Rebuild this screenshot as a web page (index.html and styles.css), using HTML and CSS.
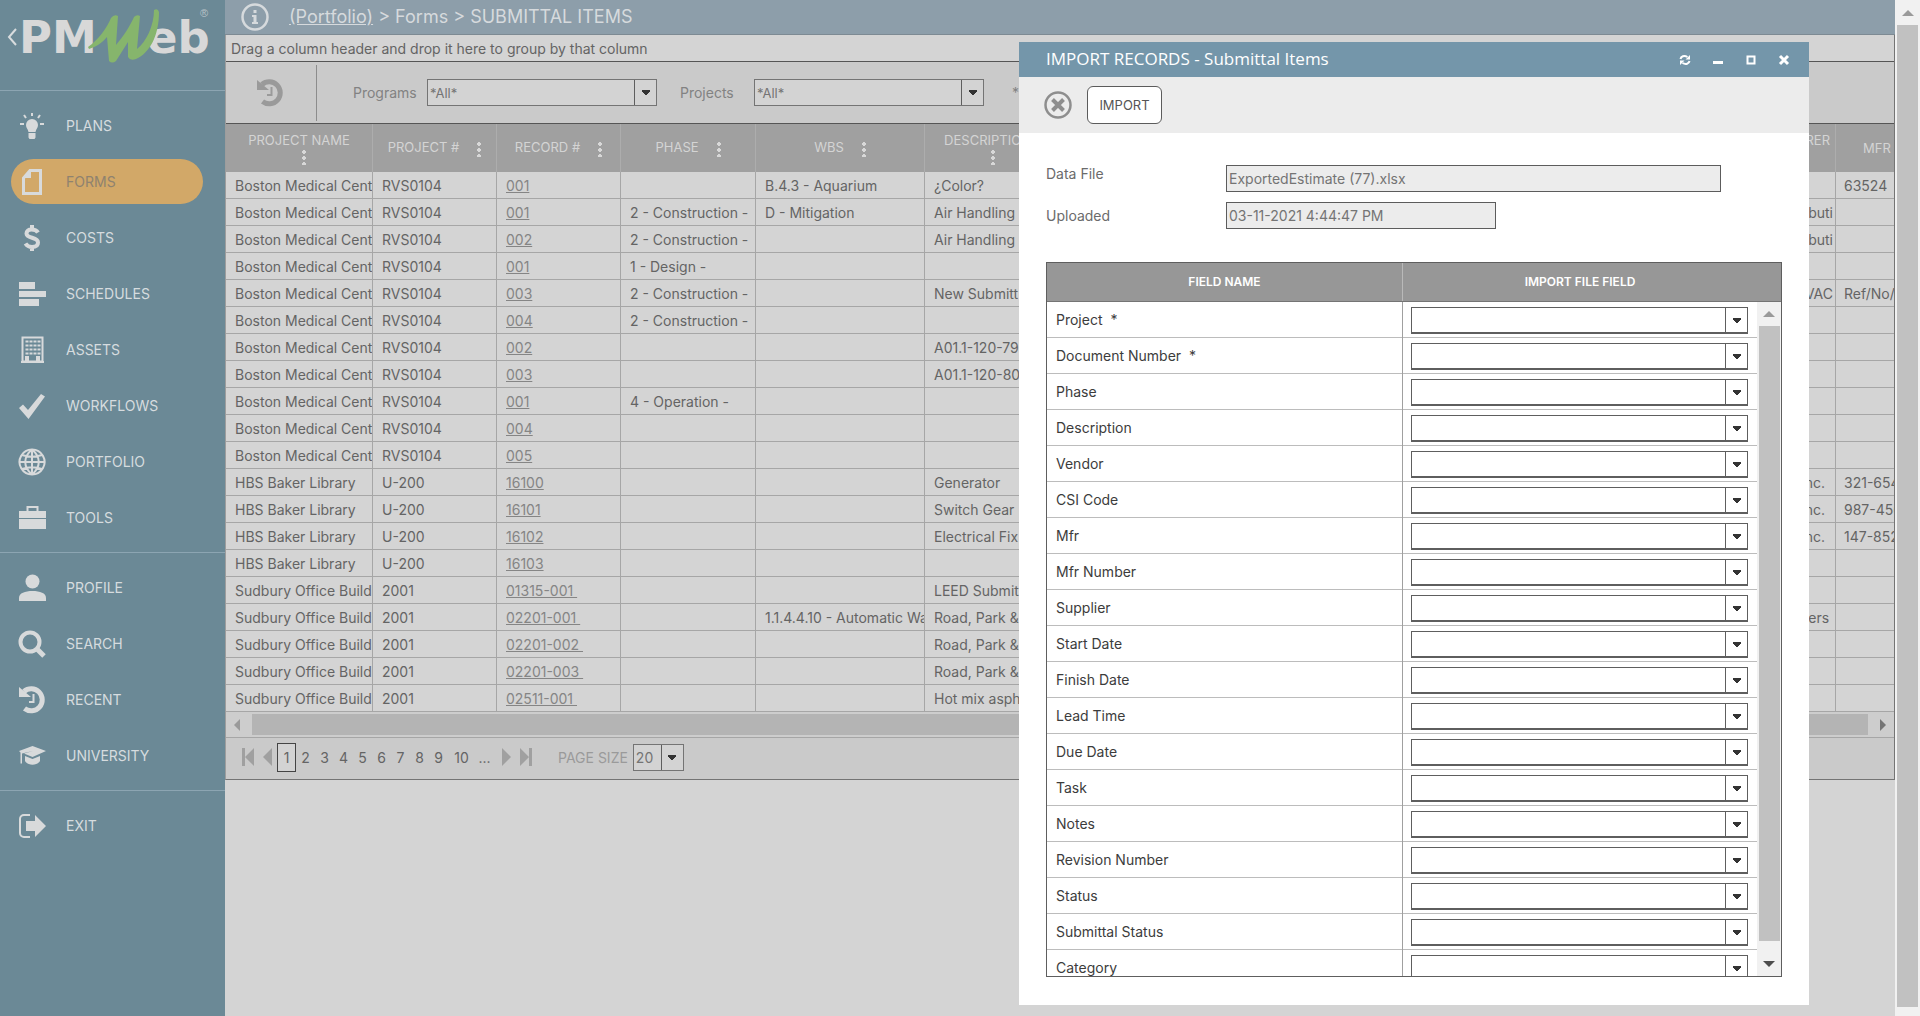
FILE: index.html
```html
<!DOCTYPE html>
<html lang="en">
<head>
<meta charset="utf-8">
<title>PMWeb - Submittal Items</title>
<link rel="stylesheet" href="styles.css">
</head>
<body>
<div class="app">
  <nav class="sidebar">
    <div class="brand">
      <svg class="logo" viewBox="0 0 225 90" role="img" aria-label="PMWeb">
        <path d="M16 29 L9 37 L16 45" fill="none" stroke="#d8dcde" stroke-width="2"/>
        <text class="logo-word" x="19" y="53">PM</text>
        <text class="logo-word" x="147" y="53">eb</text>
        <path d="M88 47C98 40 107 28 111 18Q114 14 118 16L116 45C123 37 130 26 134 17Q137 14 140 16L137 49C146 42 154 26 154 10Q158 8 159 12C159 35 150 53 136 59Q130 61 128 57L128 42L116 61Q112 64 109 61L107 37C103 42 96 47 89 49Z" fill="#86b56c"/>
        <text class="logo-mark" x="200" y="17">®</text>
      </svg>
    </div>
    <ul class="menu">
      <li><a href="#"><svg viewBox="0 0 28 28"><path d="M14 7a6 6 0 0 1 6 6c0 3-2 4-2.500 7h-7C10 17 8 16 8 13a6 6 0 0 1 6-6zM10.500 21h7v4.500l-1 1.500h-5l-1-1.500z"/><path class="line thin" d="M14 1v3M6 3l2 3M22 3l-2 3M2 12h4M22 12h4"/></svg>PLANS</a></li>
      <li><a href="#" class="active"><svg viewBox="0 0 28 28"><path class="line" d="M12 2.500h10.500v23h-17V10z"/><path d="M5 10h8V2z"/></svg>FORMS</a></li>
      <li><a href="#"><svg viewBox="0 0 28 28"><path class="line bold" d="M20 8.500C18.500 6 16 5.500 13.500 5.500c-3 0-5 1.500-5 4 0 5.500 11.500 3 11.500 9 0 3-2.500 4.500-6 4.500-3 0-5-1-6.500-3.500M14 1v5M14 22v5"/></svg>COSTS</a></li>
      <li><a href="#"><svg viewBox="0 0 28 28"><path d="M1 2h16v7H1zM1 11h27v6H1zM1 19h20v7H1z"/></svg>SCHEDULES</a></li>
      <li><a href="#"><svg viewBox="0 0 28 28"><path class="line thin" d="M4.500 1.500h20v24h-20z"/><path class="line thin dashed" d="M7.500 5.500h15M7.500 9.500h15M7.500 13.500h15M7.500 17.500h15"/><path d="M7 20h4v5H7zM18 20h4v5h-4zM3 25h23v2H3z"/></svg>ASSETS</a></li>
      <li><a href="#"><svg viewBox="0 0 28 28"><path d="M1 16l4-3.500 5 5.500L23 2l4 2.500L10.500 27z"/></svg>WORKFLOWS</a></li>
      <li><a href="#"><svg viewBox="0 0 28 28"><path class="line thin" d="M14 1.500a12.500 12.500 0 1 0 .1 0zM14 1.500C5 9 5 19 14 26.500M14 1.500c9 7.500 9 17.500 0 25M14 1v26M1 14h26M4 7c6 2 14 2 20 0M4 21c6-2 14-2 20 0"/></svg>PORTFOLIO</a></li>
      <li><a href="#"><svg viewBox="0 0 28 28"><path d="M1 7h27v7H1zM1 15h27v10H1z"/><path class="line thin" d="M9.500 7V3h10v4"/></svg>TOOLS</a></li>
    </ul>
    <ul class="menu">
      <li><a href="#"><svg viewBox="0 0 28 28"><circle cx="14.500" cy="7.500" r="7"/><path d="M1 27v-3c0-5 6-7 13.500-7S28 19 28 24v3z"/></svg>PROFILE</a></li>
      <li><a href="#"><svg viewBox="0 0 28 28"><circle class="line bold" cx="12" cy="12" r="9.500"/><path class="line wide" d="M19 19l7 7"/></svg>SEARCH</a></li>
      <li><a href="#"><svg viewBox="0 0 28 28"><path class="line wide" d="M6 5.500A11 11 0 1 1 6.500 22.500"/><path d="M1 1l12 10H1z"/><path class="line thin" d="M15.500 8v8H11"/></svg>RECENT</a></li>
      <li><a href="#"><svg viewBox="0 0 28 28"><path d="M14.500 4L28 9l-13.500 6L6 11.500l9-2.500-11 2.500v10H2.500V10.500L1 9z"/><path d="M7 14l7.500 3L22 14v5c-3 5-12 5-15 0z"/></svg>UNIVERSITY</a></li>
    </ul>
    <ul class="menu">
      <li><a href="#"><svg viewBox="0 0 28 28"><path class="line thin" d="M12 3H6a4 4 0 0 0-4 4v14a4 4 0 0 0 4 4h6"/><path d="M8 9h9V3l11 11-11 11v-6H8z"/></svg>EXIT</a></li>
    </ul>
  </nav>

  <main class="content">
    <header class="topbar">
      <svg class="info" viewBox="0 0 28 28"><circle cx="14" cy="14" r="12.500" fill="none" stroke="currentColor" stroke-width="2.500"/><path d="M12.500 7h3v3h-3zM11 12h4.500v7H17v2h-6v-2h1.500v-5H11z" fill="currentColor"/></svg>
      <span><a href="#">(Portfolio)</a> &gt; Forms &gt; SUBMITTAL ITEMS</span>
    </header>
    <section class="records">
      <div class="group-hint">Drag a column header and drop it here to group by that column</div>
      <div class="filters">
        <button class="history" aria-label="Reset filters"><svg viewBox="0 0 28 28"><path class="line wide" d="M6 5.500A11 11 0 1 1 6.500 22.500"/><path d="M1 1l12 10H1z"/><path class="line thin" d="M15.500 8v8H11"/></svg></button>
        <label for="programs">Programs</label>
        <span class="combo wide-combo"><select id="programs"><option>*All*</option></select></span>
        <label for="projects">Projects</label>
        <span class="combo wide-combo"><select id="projects"><option>*All*</option></select></span>
        <span class="more">*</span>
      </div>
      <table class="grid">
        <colgroup><col class="c-name"><col class="c-num"><col class="c-rec"><col class="c-phase"><col class="c-wbs"><col class="c-desc"><col><col class="c-mfr"></colgroup>
        <thead><tr>
          <th>PROJECT NAME<i class="dots under"></i></th><th>PROJECT #<i class="dots"></i></th><th>RECORD #<i class="dots"></i></th><th>PHASE<i class="dots"></i></th><th>WBS<i class="dots"></i></th><th>DESCRIPTION<i class="dots under"></i></th><th class="maker">RER<i class="dots under"></i></th><th class="last">MFR</th>
        </tr></thead>
        <tbody>
          <tr><td>Boston Medical Cent<td>RVS0104<td><a href="#">001</a><td><td>B.4.3 - Aquarium<td>¿Color?<td><td>63524</tr>
          <tr><td>Boston Medical Cent<td>RVS0104<td><a href="#">001</a><td>2 - Construction -<td>D - Mitigation<td>Air Handling<td>buti<td></tr>
          <tr><td>Boston Medical Cent<td>RVS0104<td><a href="#">002</a><td>2 - Construction -<td><td>Air Handling<td>buti<td></tr>
          <tr><td>Boston Medical Cent<td>RVS0104<td><a href="#">001</a><td>1 - Design -<td><td><td><td></tr>
          <tr><td>Boston Medical Cent<td>RVS0104<td><a href="#">003</a><td>2 - Construction -<td><td>New Submitt<td>VAC<td>Ref/No/</tr>
          <tr><td>Boston Medical Cent<td>RVS0104<td><a href="#">004</a><td>2 - Construction -<td><td><td><td></tr>
          <tr><td>Boston Medical Cent<td>RVS0104<td><a href="#">002</a><td><td><td>A01.1-120-790<td><td></tr>
          <tr><td>Boston Medical Cent<td>RVS0104<td><a href="#">003</a><td><td><td>A01.1-120-801<td><td></tr>
          <tr><td>Boston Medical Cent<td>RVS0104<td><a href="#">001</a><td>4 - Operation -<td><td><td><td></tr>
          <tr><td>Boston Medical Cent<td>RVS0104<td><a href="#">004</a><td><td><td><td><td></tr>
          <tr><td>Boston Medical Cent<td>RVS0104<td><a href="#">005</a><td><td><td><td><td></tr>
          <tr><td>HBS Baker Library<td>U-200<td><a href="#">16100</a><td><td><td>Generator<td>nc.&nbsp;&nbsp;<td>321-654</tr>
          <tr><td>HBS Baker Library<td>U-200<td><a href="#">16101</a><td><td><td>Switch Gear<td>nc.&nbsp;&nbsp;<td>987-456</tr>
          <tr><td>HBS Baker Library<td>U-200<td><a href="#">16102</a><td><td><td>Electrical Fix<td>nc.&nbsp;&nbsp;<td>147-852</tr>
          <tr><td>HBS Baker Library<td>U-200<td><a href="#">16103</a><td><td><td><td><td></tr>
          <tr><td>Sudbury Office Build<td>2001<td><a href="#">01315-001&nbsp;</a><td><td><td>LEED Submit<td><td></tr>
          <tr><td>Sudbury Office Build<td>2001<td><a href="#">02201-001&nbsp;</a><td><td>1.1.4.4.10 - Automatic Wa<td>Road, Park &amp;<td>ers&nbsp;<td></tr>
          <tr><td>Sudbury Office Build<td>2001<td><a href="#">02201-002&nbsp;</a><td><td><td>Road, Park &amp;<td><td></tr>
          <tr><td>Sudbury Office Build<td>2001<td><a href="#">02201-003&nbsp;</a><td><td><td>Road, Park &amp;<td><td></tr>
          <tr><td>Sudbury Office Build<td>2001<td><a href="#">02511-001&nbsp;</a><td><td><td>Hot mix asph<td><td></tr>
        </tbody>
      </table>
      <div class="hscroll"><i class="tri left"></i><div class="hthumb"></div><i class="tri right"></i></div>
      <div class="pager">
        <button aria-label="First page"><svg viewBox="0 0 12 18"><path d="M0 0h3v18H0zM12 0v18L3 9z"/></svg></button>
        <button aria-label="Previous page" class="prev"><svg viewBox="0 0 12 18"><path d="M10 0v18L1 9z"/></svg></button>
        <a href="#" class="current">1</a><a href="#">2</a><a href="#">3</a><a href="#">4</a><a href="#">5</a><a href="#">6</a><a href="#">7</a><a href="#">8</a><a href="#">9</a><a href="#" class="ten">10</a><a href="#">...</a>
        <button aria-label="Next page" class="next"><svg viewBox="0 0 12 18"><path d="M2 0v18l9-9z"/></svg></button>
        <button aria-label="Last page"><svg viewBox="0 0 12 18"><path d="M9 0h3v18H9zM0 0v18l9-9z"/></svg></button>
        <label for="size">PAGE SIZE</label>
        <span class="combo size-combo"><select id="size"><option>20</option></select></span>
      </div>
    </section>
  </main>

  <div class="page-scroll"><i class="tri up"></i><div class="thumb"></div><span class="cap"></span></div>

  <section class="dialog" role="dialog" aria-labelledby="dialog-title">
    <header class="titlebar">
      <h1 id="dialog-title">IMPORT RECORDS - Submittal Items</h1>
      <button aria-label="Reload"><svg viewBox="0 0 12 12"><path class="stroke" d="M1.500 5C2 2.500 5 1 8.500 3M10.500 7C10 9.500 7 11 3.500 9"/><path d="M11 1v4.500H6.500zM1 11V6.500h4.500z"/></svg></button>
      <button aria-label="Minimize"><svg viewBox="0 0 12 12"><path d="M1 7h10v3H1z"/></svg></button>
      <button aria-label="Maximize"><svg viewBox="0 0 12 12"><path class="stroke" d="M2.500 2.500h7v7h-7z"/></svg></button>
      <button aria-label="Close"><svg viewBox="0 0 12 12"><path class="stroke thick" d="M2 2l8 8M10 2l-8 8"/></svg></button>
    </header>
    <div class="toolbar">
      <button class="cancel" aria-label="Cancel"><svg viewBox="0 0 28 28"><circle cx="14" cy="14" r="12.500" fill="none" stroke="currentColor" stroke-width="2.500"/><path d="M8.500 8.500l11 11M19.500 8.500l-11 11" stroke="currentColor" stroke-width="4"/></svg></button>
      <button class="import">IMPORT</button>
    </div>
    <div class="fields">
      <label for="file" class="raised">Data File</label><input id="file" class="file" value="ExportedEstimate (77).xlsx" readonly>
      <label for="uploaded">Uploaded</label><input id="uploaded" class="stamp" value="03-11-2021 4:44:47 PM" readonly>
    </div>
    <div class="mapping">
      <div class="map-head"><span>FIELD NAME</span><span>IMPORT FILE FIELD</span></div>
      <div class="map-body">
        <div class="map-rows">
          <div class="row"><label for="f1">Project &nbsp;*</label><span class="combo"><select id="f1"></select></span></div>
          <div class="row"><label for="f2">Document Number &nbsp;*</label><span class="combo"><select id="f2"></select></span></div>
          <div class="row"><label for="f3">Phase</label><span class="combo"><select id="f3"></select></span></div>
          <div class="row"><label for="f4">Description</label><span class="combo"><select id="f4"></select></span></div>
          <div class="row"><label for="f5">Vendor</label><span class="combo"><select id="f5"></select></span></div>
          <div class="row"><label for="f6">CSI Code</label><span class="combo"><select id="f6"></select></span></div>
          <div class="row"><label for="f7">Mfr</label><span class="combo"><select id="f7"></select></span></div>
          <div class="row"><label for="f8">Mfr Number</label><span class="combo"><select id="f8"></select></span></div>
          <div class="row"><label for="f9">Supplier</label><span class="combo"><select id="f9"></select></span></div>
          <div class="row"><label for="f10">Start Date</label><span class="combo"><select id="f10"></select></span></div>
          <div class="row"><label for="f11">Finish Date</label><span class="combo"><select id="f11"></select></span></div>
          <div class="row"><label for="f12">Lead Time</label><span class="combo"><select id="f12"></select></span></div>
          <div class="row"><label for="f13">Due Date</label><span class="combo"><select id="f13"></select></span></div>
          <div class="row"><label for="f14">Task</label><span class="combo"><select id="f14"></select></span></div>
          <div class="row"><label for="f15">Notes</label><span class="combo"><select id="f15"></select></span></div>
          <div class="row"><label for="f16">Revision Number</label><span class="combo"><select id="f16"></select></span></div>
          <div class="row"><label for="f17">Status</label><span class="combo"><select id="f17"></select></span></div>
          <div class="row"><label for="f18">Submittal Status</label><span class="combo"><select id="f18"></select></span></div>
          <div class="row"><label for="f19">Category</label><span class="combo"><select id="f19"></select></span></div>
        </div>
        <div class="vscroll"><i class="tri up"></i><div class="thumb"></div><i class="tri down"></i></div>
      </div>
    </div>
  </section>
</div>
</body>
</html>
```
FILE: styles.css
```css
* { box-sizing: border-box; }
body { margin: 0; font-family: Inter, "Liberation Sans", sans-serif; font-size: 14px; color: #646464; background: #d4d4d4; }
button { margin: 0; padding: 0; border: 0; background: none; font: inherit; color: inherit; }
svg { display: block; fill: currentColor; }
.line { fill: none; stroke: currentColor; stroke-width: 3; }
.line.thin { stroke-width: 2; }
.line.bold { stroke-width: 4; }
.line.wide { stroke-width: 5; }
.line.dashed { stroke-dasharray: 3 1; }

.app { position: relative; display: flex; min-height: 100vh; }

/* Navigation */
.sidebar { width: 225px; flex: none; background: #6b8996; color: #d6dcdf; }
.brand { height: 90px; }
.logo { width: 225px; height: 90px; }
.logo-word { font: bold 45px "DejaVu Sans", sans-serif; fill: #d8d8d8; }
.logo-mark { font: 11px "Liberation Sans", sans-serif; fill: #b9c3c8; }
.menu { list-style: none; margin: 0; padding: 12px 22px 12px 11px; border-top: 1px solid #8ca5b2; display: grid; gap: 11px; }
.menu a { display: flex; align-items: center; gap: 20px; height: 45px; padding-left: 7px; border-radius: 23px; color: inherit; text-decoration: none; }
.menu svg { width: 28px; height: 28px; color: #d8dadb; }
.menu .active { background: #d2a868; color: #8f826f; }

/* Records list */
.content { flex: 1; min-width: 0; }
.topbar { display: flex; align-items: center; gap: 20px; height: 35px; padding: 0 0 1px 16px; background: #8d9eaa; border-bottom: 1px solid #7d8a93; color: #d6dadd; font-size: 18px; }
.topbar a { color: inherit; }
.info { width: 28px; height: 28px; }
.records { border: solid #747474; border-width: 0 1px 1px; border-left-color: #9d9d9d; }
.group-hint { height: 27px; padding-left: 5px; line-height: 27px; border-bottom: 1px solid #555; }
.filters { display: flex; align-items: center; height: 62px; background: #cacaca; border-bottom: 1px solid #555; color: #828282; }
.filters label { width: 74px; }
.filters .combo { margin-right: 23px; }
.filters .more { padding-left: 5px; }
.history { width: 91px; height: 56px; padding-left: 30px; margin-right: 36px; border-right: 1px solid #8c8c8c; color: #9a9a9a; }
.history svg { width: 28px; height: 28px; }

.combo { display: inline-grid; grid-template-columns: 1fr 22px; border: 1px solid #5e5e5e; height: 27px; }
.combo select { grid-area: 1 / 1 / 2 / 3; appearance: none; min-width: 0; width: 100%; border: 0; padding: 0 2px; background: none; font: inherit; color: inherit; border-radius: 0; }
.combo::after { content: ""; grid-area: 1 / 2; align-self: stretch; border-left: 1px solid #5e5e5e; background: conic-gradient(from -50deg at 50% 100%, #333 100deg, transparent 0) center / 8px 5px no-repeat; pointer-events: none; }
.wide-combo { width: 230px; background: #d3d3d3; font-size: 13px; border-color: #747474; color: #747474; }

.grid { width: 100%; table-layout: fixed; border-collapse: separate; border-spacing: 0; }
.c-name { width: 147px; } .c-num { width: 124px; } .c-rec { width: 124px; }
.c-phase { width: 135px; } .c-wbs { width: 169px; } .c-desc { width: 126px; } .c-mfr { width: 58px; }
.grid th { height: 48px; padding: 0; background: #a0a0a0; color: #d4d4d4; font-weight: 400; font-size: 13px; border-right: 1px solid #adadad; overflow: hidden; white-space: nowrap; }
.grid td { height: 27px; padding: 2px 0 0 9px; line-height: 24px; border: solid #a6a6a6; border-width: 0 1px 1px 0; overflow: hidden; white-space: nowrap; }
.grid td a { color: #858585; }
.grid td:nth-child(7) { text-align: right; padding-right: 2px; }
.grid td:last-child, .grid th:last-child { border-right: 0; }
.grid td:last-child { padding-left: 8px; }
.grid .maker { text-align: right; padding-right: 5px; }
.grid .last { padding-left: 27px; text-align: left; }
.dots { display: inline-block; width: 4px; height: 16px; margin-left: 18px; vertical-align: middle; background: radial-gradient(circle, #d8d8d8 2px, transparent 2px) 0 0 / 4px 6px; }
.dots.under { display: block; margin: 1px 0 0 calc(50% + 3px); }

.hscroll { display: flex; align-items: center; height: 26px; padding: 0 8px; background: #cdcdcd; border-bottom: 1px solid #a6a6a6; gap: 12px; }
.hthumb { flex: 1; height: 21px; background: #b4b4b4; }
.tri { width: 0; height: 0; flex: none; border: 6px solid transparent; }
.tri.left { border-left-width: 0; border-right-color: #9a9a9a; }
.tri.right { border-right-width: 0; border-left-color: #747474; }
.tri.up { border-top-width: 0; border-bottom-color: #9a9a9a; }
.tri.down { border-bottom-width: 0; border-top-color: #4d4d4d; }

.pager { display: flex; align-items: center; height: 41px; padding: 0 0 3px 16px; background: #cacaca; }
.pager button { width: 20px; color: #a0a0a0; }
.pager .prev { width: 15px; }
.pager .next { margin-left: 6px; }
.pager svg { width: 12px; height: 18px; }
.pager a { width: 19px; text-align: center; color: inherit; text-decoration: none; }
.pager .current { height: 29px; line-height: 27px; border: 1px solid #444; background: #d3d3d3; }
.pager .ten { width: 27px; }
.pager label { margin: 0 5px 0 18px; color: #9a9a9a; }
.size-combo { width: 51px; background: #d3d3d3; border-color: #747474; color: #747474; }

/* Page scrollbar */
.page-scroll { display: flex; flex-direction: column; align-items: center; width: 25px; padding-top: 10px; background: #f1f1f1; }
.page-scroll .thumb { flex: 1; width: 21px; margin-top: 9px; background: #c1c1c1; }
.cap { height: 9px; }

/* Import window, floating over the list */
.dialog { position: absolute; top: 42px; right: 111px; bottom: 11px; width: 790px; display: flex; flex-direction: column; background: #fff; }
.titlebar { display: flex; align-items: center; gap: 21px; height: 35px; padding: 0 19px 0 27px; background: #7496aa; color: #fff; flex: none; }
.titlebar h1 { flex: 1; margin: 0; padding-bottom: 2px; font: 400 17px "Open Sans", "Noto Sans", sans-serif; }
.titlebar svg { width: 12px; height: 12px; }
.stroke { fill: none; stroke: currentColor; stroke-width: 2; }
.stroke.thick { stroke-width: 3; }
.toolbar { display: flex; align-items: center; gap: 15px; height: 56px; padding-left: 25px; background: #ececec; flex: none; }
.cancel { color: #8e8e8e; }
.cancel svg { width: 28px; height: 28px; }
.import { width: 75px; height: 38px; border: 1px solid #5c5c5c; border-radius: 6px; background: #fff; color: #555; font-size: 13px; }
.fields { display: grid; grid-template-columns: 180px 1fr; row-gap: 10px; padding: 32px 88px 33px 27px; align-items: center; color: #6b6b6b; }
.fields .raised { padding-bottom: 10px; }
.fields input { height: 27px; padding: 0 2px; border: 1px solid #5c5c5c; background: #ececec; font: inherit; color: #747474; }
.file { width: 100%; }
.stamp { width: 270px; }
.mapping { flex: 1; min-height: 0; display: flex; flex-direction: column; margin: 0 27px 28px; border: 1px solid #5e5e5e; }
.map-head { display: grid; grid-template-columns: 355px 1fr; flex: none; height: 39px; line-height: 38px; padding-right: 24px; background: #979797; border-bottom: 1px solid #747474; color: #fff; font-size: 12px; font-weight: 600; text-align: center; }
.map-head span + span { border-left: 1px solid #b9b9b9; }
.map-body { flex: 1; min-height: 0; display: flex; overflow: hidden; }
.map-rows { flex: 1; color: #3c3c3c; }
.row { display: grid; grid-template-columns: 356px 1fr; height: 36px; border-bottom: 1px solid #bcbcbc; }
.row label { padding-left: 9px; line-height: 36px; border-right: 1px solid #a0a0a0; }
.row .combo { margin: 5px 9px 0 8px; border-bottom-width: 2px; }
.vscroll { display: flex; flex-direction: column; align-items: center; width: 24px; padding: 9px 0; background: #f1f1f1; }
.vscroll .thumb { flex: 1; width: 21px; margin: 9px 0 20px; background: #c1c1c1; }
```
